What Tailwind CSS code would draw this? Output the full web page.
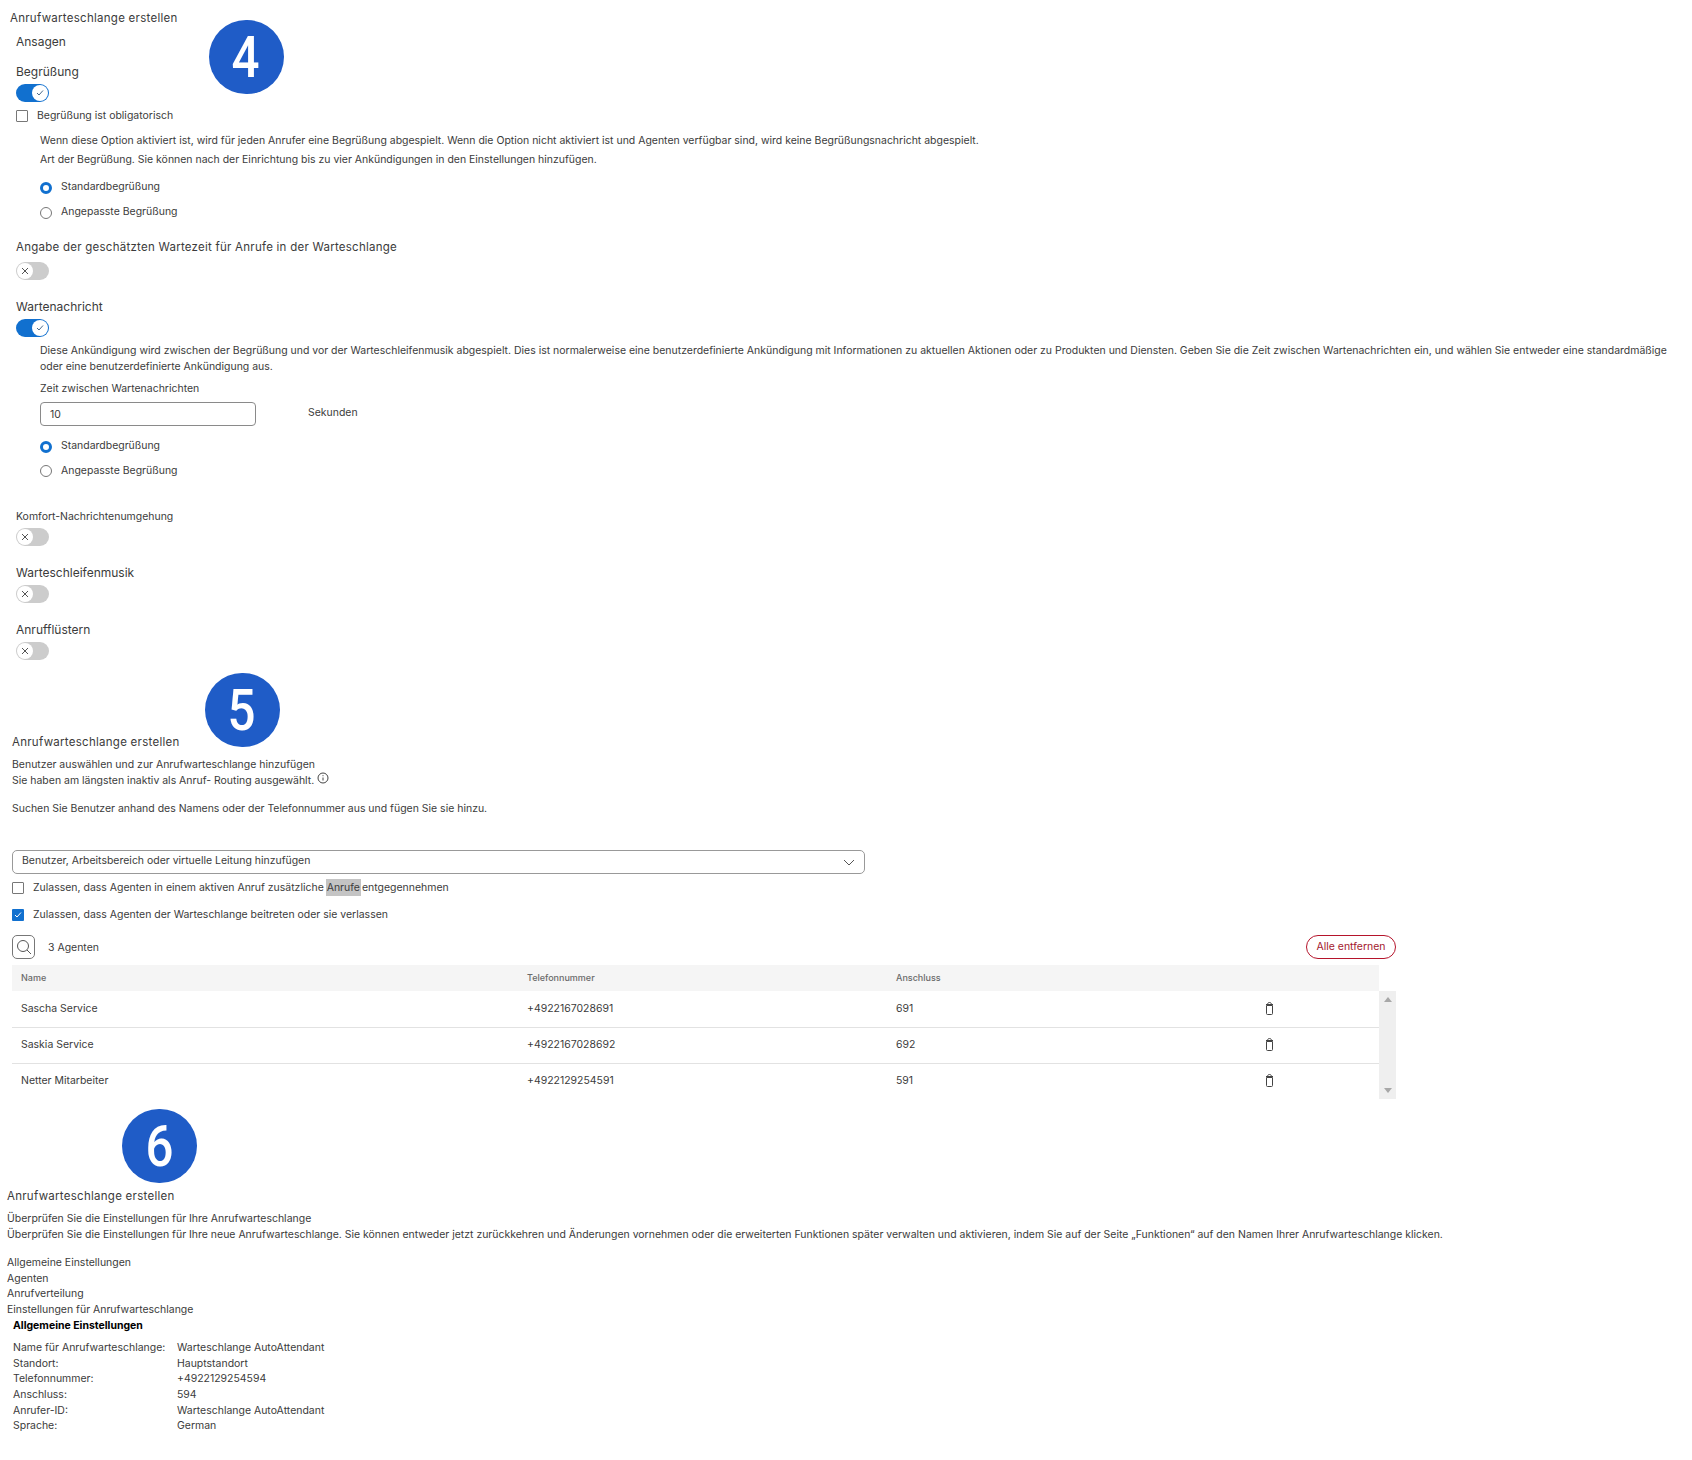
<!DOCTYPE html>
<html lang="de">

<head>
    <meta charset="UTF-8">
    <meta name="viewport" content="width=device-width, initial-scale=1.0">
    <title>Anrufwarteschlange erstellen</title>
    <script src="https://cdn.jsdelivr.net/npm/@tailwindcss/browser@4"></script>
</head>

<body class="bg-white font-['Inter',sans-serif] text-[#3b3b3b] text-[10.47px] relative h-[1460px] overflow-hidden">

    <!-- Step badges -->
    <div class="absolute left-[209px] top-[20px] w-[75px] h-[74px] rounded-full bg-[#1f5cc7] text-white flex items-center justify-center font-['Roboto',sans-serif] font-medium text-[58px]"><span class="scale-x-[0.85] -ml-[3px]">4</span></div>
    <div class="absolute left-[205px] top-[673px] w-[75px] h-[74px] rounded-full bg-[#1f5cc7] text-white flex items-center justify-center font-['Roboto',sans-serif] font-medium text-[58px]"><span class="scale-x-[0.85] -ml-[2px]">5</span></div>
    <div class="absolute left-[122px] top-[1109px] w-[75px] h-[74px] rounded-full bg-[#1f5cc7] text-white flex items-center justify-center font-['Roboto',sans-serif] font-medium text-[58px]"><span class="scale-x-[0.85]">6</span></div>

    <!-- Step 4 -->
    <section class="h-[670px] pt-[9px] pl-[10px]">
        <h2 class="text-[11.5px] leading-[18px] tracking-[0.27px]">Anrufwarteschlange erstellen</h2>
        <div class="pl-[6px]">
            <p class="text-[12px] leading-[18px] mt-[6px]">Ansagen</p>
            <p class="text-[12px] leading-[18px] mt-[12px]">Begrüßung</p>
            <div class="mt-[3px] w-[33px] h-[18px] rounded-full bg-[#1170cf] flex items-center justify-end">
                <span class="w-[16px] h-[16px] mr-[1px] rounded-full bg-white flex items-center justify-center">
                    <svg class="w-[8px] h-[8px]" viewBox="0 0 8 8" fill="none" stroke="#4a6a8a"><path d="M1 4l2 2 4-4.500" /></svg>
                </span>
            </div>
            <label class="flex items-center mt-[8px] h-[12px]">
                <span class="w-[12px] h-[12px] border border-[#777] rounded-[1px] mr-[9px]"></span>
                <span class="-mt-[1px]">Begrüßung ist obligatorisch</span>
            </label>
            <div class="pl-[24px]">
                <p class="leading-[19px] mt-[9px]">Wenn diese Option aktiviert ist, wird für jeden Anrufer eine Begrüßung abgespielt. Wenn die Option nicht aktiviert ist und Agenten verfügbar sind, wird keine Begrüßungsnachricht abgespielt.</p>
                <p class="leading-[19px]">Art der Begrüßung. Sie können nach der Einrichtung bis zu vier Ankündigungen in den Einstellungen hinzufügen.</p>
                <div class="flex items-center h-[12px] mt-[13px]">
                    <span class="w-[12px] h-[12px] rounded-full border-[3px] border-[#1170cf] mr-[9px]"></span>
                    <span class="-mt-[2px]">Standardbegrüßung</span>
                </div>
                <div class="flex items-center h-[12px] mt-[13px]">
                    <span class="w-[12px] h-[12px] rounded-full border border-[#777] mr-[9px]"></span>
                    <span class="-mt-[3px]">Angepasste Begrüßung</span>
                </div>
            </div>
            <p class="text-[11.5px] leading-[18px] mt-[19px] tracking-[0.25px]">Angabe der geschätzten Wartezeit für Anrufe in der Warteschlange</p>
            <div class="mt-[6px] w-[33px] h-[18px] rounded-full bg-[#cccccc] flex items-center">
                <span class="w-[16px] h-[16px] ml-[1px] rounded-full bg-white flex items-center justify-center">
                    <svg class="w-[8px] h-[8px]" viewBox="0 0 8 8" fill="none" stroke="#555"><path d="M1 1l6 6M7 1l-6 6" /></svg>
                </span>
            </div>
            <p class="text-[12px] leading-[18px] mt-[18px]">Wartenachricht</p>
            <div class="mt-[3px] w-[33px] h-[18px] rounded-full bg-[#1170cf] flex items-center justify-end">
                <span class="w-[16px] h-[16px] mr-[1px] rounded-full bg-white flex items-center justify-center">
                    <svg class="w-[8px] h-[8px]" viewBox="0 0 8 8" fill="none" stroke="#4a6a8a"><path d="M1 4l2 2 4-4.500" /></svg>
                </span>
            </div>
            <div class="pl-[24px]">
                <p class="leading-[16px] mt-[6px] w-[1640px]">Diese Ankündigung wird zwischen der Begrüßung und vor der Warteschleifenmusik abgespielt. Dies ist normalerweise eine benutzerdefinierte Ankündigung mit Informationen zu aktuellen Aktionen oder zu Produkten und Diensten. Geben Sie die Zeit zwischen Wartenachrichten ein, und wählen Sie entweder eine standardmäßige oder eine benutzerdefinierte Ankündigung aus.</p>
                <p class="leading-[16px] mt-[6px]">Zeit zwischen Wartenachrichten</p>
                <div class="flex items-start mt-[5px]">
                    <div class="w-[216px] h-[24px] border border-[#8a8a8a] rounded-[4px] pl-[9px] pt-[1px] flex items-center">10</div>
                    <span class="ml-[52px] leading-[22px]">Sekunden</span>
                </div>
                <div class="flex items-center h-[12px] mt-[15px]">
                    <span class="w-[12px] h-[12px] rounded-full border-[3px] border-[#1170cf] mr-[9px]"></span>
                    <span class="-mt-[3px]">Standardbegrüßung</span>
                </div>
                <div class="flex items-center h-[12px] mt-[12px]">
                    <span class="w-[12px] h-[12px] rounded-full border border-[#777] mr-[9px]"></span>
                    <span class="-mt-[1px]">Angepasste Begrüßung</span>
                </div>
            </div>
            <p class="leading-[16px] mt-[32px]">Komfort-Nachrichtenumgehung</p>
            <div class="mt-[3px] w-[33px] h-[18px] rounded-full bg-[#cccccc] flex items-center">
                <span class="w-[16px] h-[16px] ml-[1px] rounded-full bg-white flex items-center justify-center">
                    <svg class="w-[8px] h-[8px]" viewBox="0 0 8 8" fill="none" stroke="#555"><path d="M1 1l6 6M7 1l-6 6" /></svg>
                </span>
            </div>
            <p class="text-[12px] leading-[18px] mt-[18px]">Warteschleifenmusik</p>
            <div class="mt-[3px] w-[33px] h-[18px] rounded-full bg-[#cccccc] flex items-center">
                <span class="w-[16px] h-[16px] ml-[1px] rounded-full bg-white flex items-center justify-center">
                    <svg class="w-[8px] h-[8px]" viewBox="0 0 8 8" fill="none" stroke="#555"><path d="M1 1l6 6M7 1l-6 6" /></svg>
                </span>
            </div>
            <p class="text-[12px] leading-[18px] mt-[18px]">Anrufflüstern</p>
            <div class="mt-[3px] w-[33px] h-[18px] rounded-full bg-[#cccccc] flex items-center">
                <span class="w-[16px] h-[16px] ml-[1px] rounded-full bg-white flex items-center justify-center">
                    <svg class="w-[8px] h-[8px]" viewBox="0 0 8 8" fill="none" stroke="#555"><path d="M1 1l6 6M7 1l-6 6" /></svg>
                </span>
            </div>
        </div>
    </section>

    <!-- Step 5 -->
    <section class="h-[440px] pl-[12px] pt-[63px]">
        <h2 class="text-[11.5px] leading-[18px] tracking-[0.27px]">Anrufwarteschlange erstellen</h2>
        <p class="leading-[16px] mt-[6px]">Benutzer auswählen und zur Anrufwarteschlange hinzufügen</p>
        <p class="leading-[16px] flex items-start">Sie haben am längsten inaktiv als Anruf- Routing ausgewählt.
            <svg class="w-[12px] h-[12px] ml-[3px] -mt-[1px]" viewBox="0 0 12 12" fill="none" stroke="#444"><circle cx="6" cy="6" r="5" /><path d="M6 5.500v3M6 3.200v1" /></svg>
        </p>
        <p class="leading-[16px] mt-[12px]">Suchen Sie Benutzer anhand des Namens oder der Telefonnummer aus und fügen Sie sie hinzu.</p>
        <div class="w-[853px] h-[24px] mt-[33px] border border-[#999] rounded-[5px] pl-[9px] pr-[9px] flex items-center justify-between">
            <span class="-mt-[2px]">Benutzer, Arbeitsbereich oder virtuelle Leitung hinzufügen</span>
            <svg class="w-[12px] h-[7px]" viewBox="0 0 12 7" fill="none" stroke="#555"><path d="M1 1l5 5 5-5" /></svg>
        </div>
        <label class="flex items-center mt-[8px] h-[12px]">
            <span class="w-[12px] h-[12px] border border-[#777] rounded-[1px] mr-[9px]"></span>
            <span>Zulassen, dass Agenten in einem aktiven Anruf zusätzliche <span class="bg-[#c4c4c4] px-[1px] py-[2px] -ml-[1px]">Anrufe</span><span class="ml-[1px]">entgegennehmen</span></span>
        </label>
        <label class="flex items-center mt-[14px] h-[13px]">
            <span class="w-[12px] h-[12px] bg-[#1170cf] rounded-[1px] mr-[9px] flex items-center justify-center">
                <svg class="w-[8px] h-[8px]" viewBox="0 0 8 8" fill="none" stroke="#fff"><path d="M1 4l2 2 4-4.500" /></svg>
            </span>
            <span>Zulassen, dass Agenten der Warteschlange beitreten oder sie verlassen</span>
        </label>
        <div class="w-[1384px] flex items-center mt-[14px] h-[24px]">
            <span class="w-[23px] h-[24px] border border-[#777] rounded-[5px] flex items-center justify-center">
                <svg class="w-[16px] h-[16px]" viewBox="0 0 16 16" fill="none" stroke="#555"><circle cx="7" cy="7" r="5.500" /><path d="M11 11l4 4" /></svg>
            </span>
            <span class="ml-[13px] mt-[1px]">3 Agenten</span>
            <span class="ml-auto h-[24px] w-[90px] border border-[#b5142b] rounded-full flex items-center justify-center text-[#a3182e] -mt-[1px]">Alle entfernen</span>
        </div>

        <!-- Agents table -->
        <div class="w-[1384px] mt-[6px]">
            <div class="w-[1367px] h-[26px] bg-[#f5f5f5] grid grid-cols-[506px_369px_1fr] pl-[9px] items-center text-[9px] text-[#6a6a6a] font-medium">
                <span>Name</span>
                <span>Telefonnummer</span>
                <span>Anschluss</span>
            </div>
            <div class="flex">
                <div class="w-[1367px]">
                    <div class="h-[37px] border-b border-[#e2e2e2] grid grid-cols-[506px_369px_369px_1fr] pl-[9px] items-center">
                        <span>Sascha Service</span>
                        <span>+4922167028691</span>
                        <span>691</span>
                        <svg class="w-[9px] h-[13px] -mt-[2px]" viewBox="0 0 9 13" fill="none" stroke="#444"><path d="M1.500 3.500h6v8a1 1 0 0 1-1 1h-4a1 1 0 0 1-1-1zM1 2.500h7M2.500 2.500c0-1.200.7-2 2-2s2 .8 2 2" /></svg>
                    </div>
                    <div class="h-[36px] pb-[2px] border-b border-[#e2e2e2] grid grid-cols-[506px_369px_369px_1fr] pl-[9px] items-center">
                        <span>Saskia Service</span>
                        <span>+4922167028692</span>
                        <span>692</span>
                        <svg class="w-[9px] h-[13px]" viewBox="0 0 9 13" fill="none" stroke="#444"><path d="M1.500 3.500h6v8a1 1 0 0 1-1 1h-4a1 1 0 0 1-1-1zM1 2.500h7M2.500 2.500c0-1.200.7-2 2-2s2 .8 2 2" /></svg>
                    </div>
                    <div class="h-[35px] pb-[2px] grid grid-cols-[506px_369px_369px_1fr] pl-[9px] items-center">
                        <span>Netter Mitarbeiter</span>
                        <span>+4922129254591</span>
                        <span>591</span>
                        <svg class="w-[9px] h-[13px]" viewBox="0 0 9 13" fill="none" stroke="#444"><path d="M1.500 3.500h6v8a1 1 0 0 1-1 1h-4a1 1 0 0 1-1-1zM1 2.500h7M2.500 2.500c0-1.200.7-2 2-2s2 .8 2 2" /></svg>
                    </div>
                </div>
                <div class="w-[17px] h-[108px] bg-[#efefef] flex flex-col justify-between items-center py-[6px]">
                    <svg class="w-[8px] h-[5px]" viewBox="0 0 8 5" fill="#a8a8a8"><path d="M4 0l4 5H0z" /></svg>
                    <svg class="w-[8px] h-[5px]" viewBox="0 0 8 5" fill="#a8a8a8"><path d="M0 0h8L4 5z" /></svg>
                </div>
            </div>
        </div>
    </section>

    <!-- Step 6 -->
    <section class="pl-[7px] pt-[77px]">
        <h2 class="text-[11.5px] leading-[18px] tracking-[0.27px]">Anrufwarteschlange erstellen</h2>
        <p class="leading-[16px] mt-[6px]">Überprüfen Sie die Einstellungen für Ihre Anrufwarteschlange</p>
        <p class="leading-[16px]">Überprüfen Sie die Einstellungen für Ihre neue Anrufwarteschlange. Sie können entweder jetzt zurückkehren und Änderungen vornehmen oder die erweiterten Funktionen später verwalten und aktivieren, indem Sie auf der Seite „Funktionen“ auf den Namen Ihrer Anrufwarteschlange klicken.</p>
        <ul class="mt-[12px] leading-[15.700px]">
            <li>Allgemeine Einstellungen</li>
            <li>Agenten</li>
            <li>Anrufverteilung</li>
            <li>Einstellungen für Anrufwarteschlange</li>
        </ul>
        <div class="pl-[6px]">
            <h3 class="font-bold text-black leading-[16px]">Allgemeine Einstellungen</h3>
            <dl class="grid grid-cols-[164px_1fr] leading-[15.700px] mt-[6px]">
                <dt>Name für Anrufwarteschlange:</dt>
                <dd>Warteschlange AutoAttendant</dd>
                <dt>Standort:</dt>
                <dd>Hauptstandort</dd>
                <dt>Telefonnummer:</dt>
                <dd>+4922129254594</dd>
                <dt>Anschluss:</dt>
                <dd>594</dd>
                <dt>Anrufer-ID:</dt>
                <dd>Warteschlange AutoAttendant</dd>
                <dt>Sprache:</dt>
                <dd>German</dd>
            </dl>
        </div>
    </section>
</body>

</html>
